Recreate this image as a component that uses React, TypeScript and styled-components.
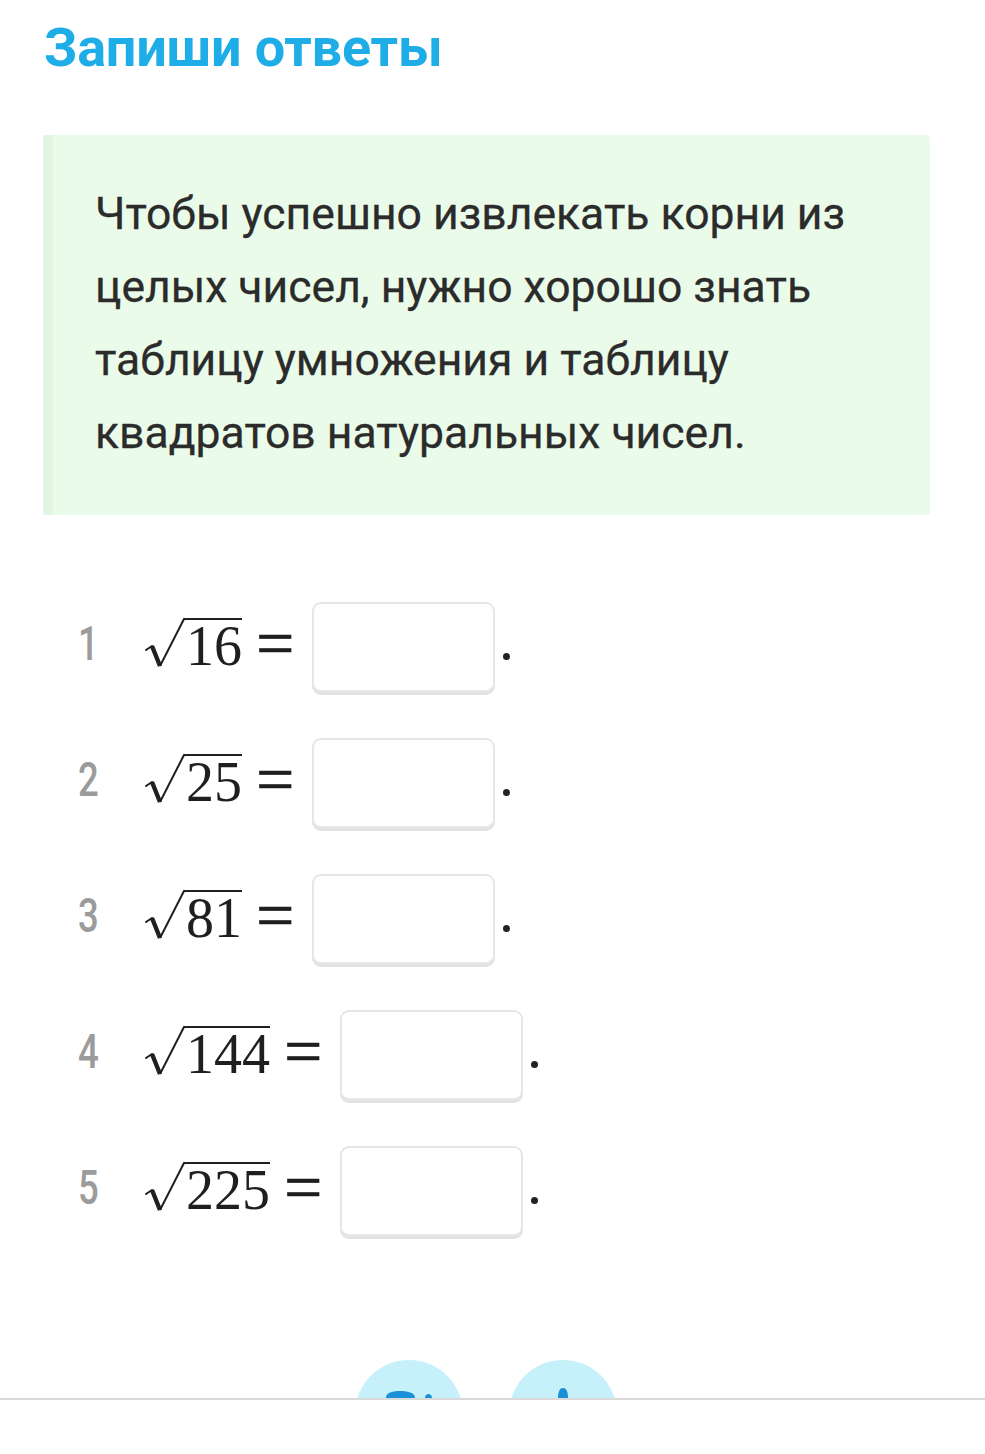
import React from "react";
import styled, { createGlobalStyle } from "styled-components";

const Global = createGlobalStyle`
  html, body { margin: 0; padding: 0; background: #ffffff; }
  body { font-family: Roboto, "Noto Sans", sans-serif; }
`;

const Page = styled.div`
  width: 985px;
  height: 1454px;
  display: flex;
  flex-direction: column;
  overflow: hidden;
`;

const Title = styled.h1`
  margin: 16px 0 0 44px;
  font-family: Roboto, sans-serif;
  font-weight: 700;
  font-size: 54px;
  line-height: 64px;
  color: #1eade6;
  letter-spacing: -0.2px;
`;

const Note = styled.div`
  margin: 55px 55px 0 43px;
  height: 380px;
  box-sizing: border-box;
  background: #ebfbea;
  border-left: 10px solid #e1f5e0;
  border-radius: 3px;
  padding: 43px 50px 0 42px;
`;

const NoteText = styled.p`
  margin: 0;
  font-family: Roboto, sans-serif;
  font-weight: 400;
  font-size: 44.5px;
  line-height: 73px;
  color: #2b2b2b;
  letter-spacing: 0;
  -webkit-text-stroke: 0.3px #2b2b2b;
`;

const Tasks = styled.div`
  margin: 87px 0 0 78px;
  display: flex;
  flex-direction: column;
  gap: 46px;
`;

const Row = styled.div`
  display: flex;
  align-items: center;
  height: 90px;
`;

const Num = styled.span`
  width: 67px;
  font-family: Roboto, sans-serif;
  font-weight: 500;
  font-size: 48px;
  line-height: 1;
  color: #9b9b9b;
  transform: scaleX(0.76);
  transform-origin: left center;
  margin-top: -6px;
`;

const Radical = styled.span`
  display: inline-flex;
  align-items: flex-start;
  margin-top: -9px;
`;

const RadicalSign = styled.svg`
  width: 42px;
  height: 52px;
  display: block;
`;

const Radicand = styled.span`
  font-family: "Liberation Serif", "Times New Roman", serif;
  font-size: 56px;
  line-height: 46px;
  color: #1f1f1f;
  border-top: 2px solid #1f1f1f;
  padding: 3px 0 0 1px;
  margin-left: -2px;
  margin-top: 1px;
`;

const Equals = styled.span`
  font-family: "Liberation Serif", "Times New Roman", serif;
  font-size: 68px;
  line-height: 1;
  color: #1f1f1f;
  margin: -8px 18px 0 14px;
  -webkit-text-stroke: 0.6px #1f1f1f;
`;

const AnswerBox = styled.div`
  width: 183px;
  height: 90px;
  flex: none;
  box-sizing: border-box;
  border: 2px solid #e7e7e7;
  border-radius: 9px;
  box-shadow: 0 3px 0 #e2e2e2;
  background: #fff;
`;

const Dot = styled.span`
  flex: none;
  display: block;
  width: 7px;
  height: 7px;
  border-radius: 50%;
  background: #222;
  margin: 18px 0 0 8px;
`;

const Spacer = styled.div`
  flex: 1;
`;

const Dock = styled.div`
  display: flex;
  height: 38px;
  overflow: hidden;
  padding-left: 355px;
  gap: 46px;
`;

const Bubble = styled.div`
  width: 108px;
  height: 108px;
  flex: none;
  border-radius: 50%;
  background: #c6f1fb;
`;

const BubbleIcon = styled.svg`
  display: block;
  width: 108px;
  height: 108px;
`;

const Divider = styled.div`
  height: 2px;
  background: #d9d9d9;
`;

const BottomBar = styled.div`
  height: 54px;
  background: #fff;
`;

const Sign = () => (
  <RadicalSign viewBox="0 0 42 52">
    <path d="M1 33 L7 29" stroke="#1f1f1f" strokeWidth="2" fill="none" strokeLinecap="round" />
    <path d="M7 29 L15 49" stroke="#1f1f1f" strokeWidth="4.4" fill="none" />
    <path d="M15 49 L39 2 L42 2" stroke="#1f1f1f" strokeWidth="2" fill="none" />
  </RadicalSign>
);

const tasks = [
  { n: 1, v: "16" },
  { n: 2, v: "25" },
  { n: 3, v: "81" },
  { n: 4, v: "144" },
  { n: 5, v: "225" },
];

export default function App() {
  return (
    <Page>
      <Global />
      <Title>Запиши ответы</Title>
      <Note>
        <NoteText>
          Чтобы успешно извлекать корни из целых чисел, нужно хорошо знать таблицу умножения и таблицу квадратов натуральных чисел.
        </NoteText>
      </Note>
      <Tasks>
        {tasks.map((t) => (
          <Row key={t.n}>
            <Num>{t.n}</Num>
            <Radical>
              <Sign />
              <Radicand>{t.v}</Radicand>
            </Radical>
            <Equals>=</Equals>
            <AnswerBox />
            <Dot />
          </Row>
        ))}
      </Tasks>
      <Spacer />
      <Dock>
        <Bubble>
          <BubbleIcon viewBox="0 0 108 108">
            <path d="M31 38 C31 33 36 31 45 31 C54 31 60 33 60 38 Z" fill="#1b8fd8" />
            <path d="M70 38 C70 35 72 34 73.5 34 C75 34 77 35 77 38 Z" fill="#1b8fd8" />
          </BubbleIcon>
        </Bubble>
        <Bubble>
          <BubbleIcon viewBox="0 0 108 108">
            <path d="M49 38 C49 31 51 28 54 28 C57 28 59 31 59 38 Z" fill="#1b8fd8" />
          </BubbleIcon>
        </Bubble>
      </Dock>
      <Divider />
      <BottomBar />
    </Page>
  );
}
